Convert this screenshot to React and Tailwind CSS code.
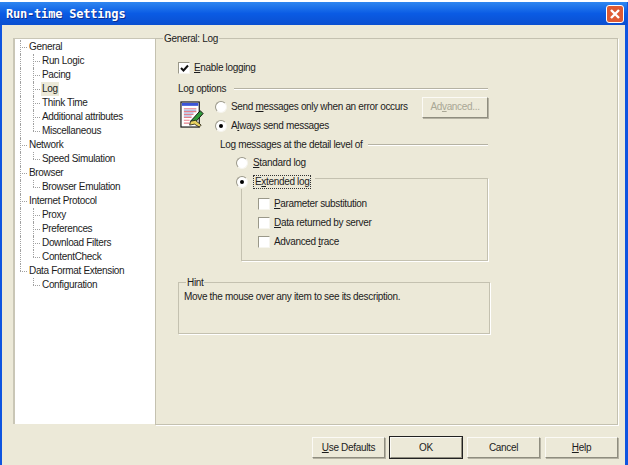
const tree = [
  { label: 'General', children: ['Run Logic', 'Pacing', 'Log', 'Think Time', 'Additional attributes', 'Miscellaneous'] },
  { label: 'Network', children: ['Speed Simulation'] },
  { label: 'Browser', children: ['Browser Emulation'] },
  { label: 'Internet Protocol', children: ['Proxy', 'Preferences', 'Download Filters', 'ContentCheck'] },
  { label: 'Data Format Extension', children: ['Configuration'] },
];

const Guide = ({ last }) => (
  <div className="relative h-[14px] w-[8px] shrink-0">
    <div className={`absolute left-0 top-0 border-l border-dotted border-[#a0a0a0] ${last ? 'h-[7px]' : 'h-[14px]'}`} />
    <div className="absolute left-0 top-[7px] w-[7px] border-t border-dotted border-[#a0a0a0]" />
  </div>
);

const Tree = () => (
  <div className="w-[142px] h-[386px] bg-white border-l-2 border-t border-[#c9c6b6] pt-[1px] pl-[5px] shrink-0">
    {tree.map((group, gi) => {
      const lastGroup = gi === tree.length - 1;
      return (
        <div key={group.label}>
          <div className="flex h-[14px] items-center">
            <Guide last={lastGroup} />
            <span className="px-[1px]">{group.label}</span>
          </div>
          {group.children.map((child, ci) => (
            <div key={child} className="flex h-[14px] items-center">
              <div className={`h-[14px] w-[13px] shrink-0 ${lastGroup ? '' : 'border-l border-dotted border-[#a0a0a0]'}`} />
              <Guide last={ci === group.children.length - 1} />
              <span className={`px-[1px] ${child === 'Log' ? 'bg-[#ece9d8]' : ''}`}>{child}</span>
            </div>
          ))}
        </div>
      );
    })}
  </div>
);

const Check = ({ checked }) => (
  <span className="w-[12px] h-[12px] shrink-0 bg-white border border-t-[#9a9889] border-l-[#9a9889] border-r-[#f6f5ee] border-b-[#f6f5ee] flex items-center justify-center">
    {checked && (
      <svg width="9" height="9" viewBox="0 0 9 9">
        <path d="M1 4l2.5 2.5L8 1.5" fill="none" stroke="#111" strokeWidth="2" />
      </svg>
    )}
  </span>
);

const Radio = ({ checked }) => (
  <span className="w-[12px] h-[12px] shrink-0 rounded-full bg-white border border-t-[#9a9889] border-l-[#9a9889] border-r-[#f6f5ee] border-b-[#f6f5ee] flex items-center justify-center">
    {checked && <span className="w-[4px] h-[4px] rounded-full bg-black" />}
  </span>
);

const Btn = ({ children, isDefault, disabled, className = '' }) => (
  <button className={`h-[21px] flex items-center justify-center border border-t-[#fbfaf5] border-l-[#fbfaf5] border-r-[#8f8d7f] border-b-[#8f8d7f] shadow-[1px_1px_0_#b5b2a3] ${isDefault ? 'outline outline-1 outline-[#222]' : ''} ${disabled ? 'text-[#a9a795]' : ''} ${className}`}>
    {children}
  </button>
);

const LogIcon = () => (
  <svg width="26" height="28" viewBox="0 0 27 29" className="shrink-0">
    <rect x="1" y="1" width="19" height="26" fill="#fff" stroke="#111" strokeWidth="1.2" />
    <rect x="2" y="2" width="17" height="3" fill="#3a55d8" />
    <path d="M4 8h13M4 11h13M4 14h10M4 17h8M4 20h6M4 23h6" stroke="#e57f8a" strokeWidth="1.2" />
    <path d="M4 9.5h13M4 12.5h10M4 15.5h8" stroke="#8f9fd0" strokeWidth="1" />
    <path d="M11 21l10-11 3 3-9 10z" fill="#2f9a3a" stroke="#111" strokeWidth="1" />
    <path d="M11 21l-1 4 5-1 5 3 2-2-6-5z" fill="#e8d260" stroke="#111" strokeWidth="0.8" />
  </svg>
);

export default function App() {
  return (
    <div className="w-[628px] h-[465px] bg-white pt-[2px] font-['Liberation_Sans',sans-serif] text-[10px] tracking-[-0.33px] leading-[14px] text-[#1c1c1c] overflow-hidden">
      <div className="h-[463px] flex flex-col bg-[#ece9d8] border-l-2 border-r-[3px] border-[#0f55e0]">
        {/* Title bar */}
        <div className="-mx-[2px] h-[23px] shrink-0 flex items-center justify-between pl-[6px] pr-[3px] bg-gradient-to-b from-[#2f86f0] via-[#0a5be4] to-[#0a4fd0]">
          <span className="font-['DejaVu_Sans_Mono',monospace] font-bold text-[12px] tracking-[-0.2px] text-white [text-shadow:1px_1px_0_#0a2f90]">Run-time Settings</span>
          <span className="w-[18px] h-[18px] rounded-[3px] bg-[#de5a33] border border-white flex items-center justify-center">
            <svg width="12" height="12" viewBox="0 0 12 12">
              <path d="M2 2l8 8M10 2l-8 8" stroke="#fff" strokeWidth="2.4" />
            </svg>
          </span>
        </div>

        {/* Body */}
        <div className="flex pl-[11px] pt-[13px]">
          <Tree />
          <div className="relative w-[463px] h-[387px] border border-[#c4c1b0] shadow-[1px_1px_0_#fff] pl-[22px] pt-[21px] flex flex-col">
            <span className="absolute left-[7px] -top-[7px] px-[1px] bg-[#ece9d8]">General: Log</span>

            <div className="flex items-center gap-[4px] h-[14px] translate-y-[1px]">
              <Check checked />
              <span><u>E</u>nable logging</span>
            </div>

            <div className="flex items-center h-[14px] mt-[8px] w-[310px]">
              <span>Log options</span>
              <div className="flex-1 ml-[8px] border-t border-b border-t-[#b5b2a3] border-b-white h-[2px]" />
            </div>

            <div className="flex mt-[1px] w-[310px]">
              <div className="pt-[4px] pl-[2px] w-[37px] shrink-0"><LogIcon /></div>
              <div className="flex-1 flex flex-col">
                <div className="flex items-center h-[20px] gap-[4px]">
                  <Radio />
                  <span className="whitespace-nowrap">Send <u>m</u>essages only when an error occurs</span>
                  <Btn disabled className="ml-auto w-[66px]">Ad<u>v</u>anced...</Btn>
                </div>
                <div className="flex items-center h-[14px] gap-[4px] mt-[2px]">
                  <Radio checked />
                  <span>A<u>l</u>ways send messages</span>
                </div>
              </div>
            </div>

            <div className="flex items-center h-[14px] mt-[5px] ml-[42px] w-[268px]">
              <span>Log messages at the detail level of</span>
              <div className="flex-1 ml-[6px] border-t border-b border-t-[#b5b2a3] border-b-white h-[2px]" />
            </div>

            <div className="flex items-center h-[14px] gap-[5px] mt-[4px] ml-[58px]">
              <Radio />
              <span><u>S</u>tandard log</span>
            </div>

            <div className="relative ml-[63px] mt-[8px] w-[247px] h-[83px] border border-[#c4c1b0] shadow-[1px_1px_0_#fff] pl-[16px] pt-[18px] flex flex-col gap-[5px]">
              <div className="absolute -left-[6px] -top-[4px] flex items-center gap-[5px] bg-[#ece9d8] pr-[4px]">
                <Radio checked />
                <span className="border border-dotted border-[#333] leading-[12px] px-[1px]">E<u>x</u>tended log</span>
              </div>
              {[
                <><u>P</u>arameter substitution</>,
                <><u>D</u>ata returned by server</>,
                <>Advanced <u>t</u>race</>,
              ].map((label, i) => (
                <div key={i} className="flex items-center h-[14px] gap-[4px]">
                  <Check />
                  <span>{label}</span>
                </div>
              ))}
            </div>

            <div className="relative mt-[21px] w-[312px] h-[52px] border border-[#c4c1b0] shadow-[1px_1px_0_#fff] pl-[5px] pt-[7px]">
              <span className="absolute left-[7px] -top-[7px] px-[1px] bg-[#ece9d8]">Hint</span>
              Move the mouse over any item to see its description.
            </div>
          </div>
        </div>

        {/* Bottom buttons */}
        <div className="flex justify-end gap-[5px] pr-[7px] pt-[12px]">
          <Btn className="w-[73px]"><u>U</u>se Defaults</Btn>
          <Btn isDefault className="w-[72px]">OK</Btn>
          <Btn className="w-[73px]">Cancel</Btn>
          <Btn className="w-[73px]"><u>H</u>elp</Btn>
        </div>
      </div>
    </div>
  );
}
